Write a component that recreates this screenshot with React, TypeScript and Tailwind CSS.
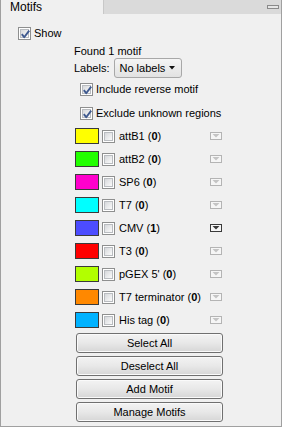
import React from "react";

const font = { fontFamily: '"Liberation Sans", Arial, sans-serif' };

function Check({ checked }: { checked?: boolean }) {
  return (
    <div className="relative w-[13px] h-[13px] shrink-0 border border-[#8e8f8f] bg-white p-[1px]">
      <div className="w-full h-full border border-[#b9bcc0] bg-linear-to-br from-[#d6d8db] to-[#fbfbfb]" />
      {checked && (
        <svg className="absolute left-0 top-0" width="13" height="13" viewBox="0 0 13 13">
          <path d="M2.8 6.2 L5.2 9.2 L10.2 2.6" fill="none" stroke="#3f5a8f" strokeWidth="1.9" strokeLinejoin="round" />
        </svg>
      )}
    </div>
  );
}

function Arrow({ enabled }: { enabled?: boolean }) {
  const c = enabled ? "#3a3a3a" : "#b4b4b4";
  const f = enabled ? "#3a3a3a" : "#c4c4c4";
  return (
    <svg width="12" height="8" viewBox="0 0 12 8" className="shrink-0">
      <rect x="0.5" y="0.5" width="11" height="7" fill="#f6f6f6" stroke={c} />
      <polygon points="2.5,2 9.5,2 6,5.5" fill={f} />
    </svg>
  );
}

const motifs = [
  { name: "attB1", count: 0, color: "#ffff00" },
  { name: "attB2", count: 0, color: "#22ff00" },
  { name: "SP6", count: 0, color: "#ff00cc" },
  { name: "T7", count: 0, color: "#00ffff" },
  { name: "CMV", count: 1, color: "#4c4cff" },
  { name: "T3", count: 0, color: "#ff0000" },
  { name: "pGEX 5'", count: 0, color: "#b2ff00" },
  { name: "T7 terminator", count: 0, color: "#ff8800" },
  { name: "His tag", count: 0, color: "#00b2ff" },
];

function Btn({ label }: { label: string }) {
  return (
    <div className="ml-[75px] w-[147px] h-[20px] rounded-[3px] border border-[#707070] bg-linear-to-b from-[#f3f3f3] via-[#e8e8e8] to-[#d6d6d6] flex items-center justify-center text-[11px] text-black shadow-[inset_0_0_0_1px_#fafafa]">
      {label}
    </div>
  );
}

export default function App() {
  return (
    <div className="w-[283px] h-[428px] bg-white" style={font}>
      <div className="w-[282px] h-[427px] bg-[#f0f0f0] border-l border-r border-b border-[#a0a0a0] flex flex-col text-[11px] text-black">
        <div className="h-[14px] flex bg-[#dadada] shrink-0">
          <div className="w-[103px] h-[14px] bg-[#f0f0f0] border-r border-[#c8c8c8] pl-[9px] text-[12px] leading-[14px]">
            Motifs
          </div>
          <div className="flex-1 flex justify-end items-start pr-[2px] pt-[5px]">
            <div className="w-[12px] h-[4px] border border-[#8a8a8a] bg-[#e6e6e6]" />
          </div>
        </div>

        <div className="mt-[13px] ml-[17px] h-[13px] flex items-center gap-[3px]">
          <Check checked />
          <span className="leading-[13px]">Show</span>
        </div>

        <div className="mt-[4px] ml-[73px] h-[14px] leading-[14px]">Found 1 motif</div>

        <div className="ml-[73px] h-[20px] flex items-center">
          <span>Labels:</span>
          <div className="ml-[5px] w-[68px] h-[20px] rounded-[3px] border border-[#a8a8a8] bg-linear-to-b from-[#f5f5f5] to-[#e2e2e2] flex items-center pl-[4px] pr-[6px] justify-between">
            <span>No labels</span>
            <svg width="6" height="4" viewBox="0 0 6 4">
              <polygon points="0,0 6,0 3,3.5" fill="#111" />
            </svg>
          </div>
        </div>

        <div className="mt-[5px] ml-[79px] h-[13px] flex items-center gap-[3px]">
          <Check checked />
          <span>Include reverse motif</span>
        </div>

        <div className="mt-[11px] ml-[79px] h-[13px] flex items-center gap-[3px]">
          <Check checked />
          <span>Exclude unknown regions</span>
        </div>

        <div className="mt-[8px] flex flex-col gap-[7px]">
          {motifs.map((m) => (
            <div key={m.name} className="ml-[74px] w-[147px] h-[16px] flex items-center">
              <div className="w-[24px] h-[16px] border border-[#3a3a3a] shrink-0" style={{ backgroundColor: m.color }} />
              <div className="ml-[3px]">
                <Check />
              </div>
              <span className="ml-[4px] flex-1 whitespace-nowrap">
                {m.name} (<b>{m.count}</b>)
              </span>
              <Arrow enabled={m.count > 0} />
            </div>
          ))}
        </div>

        <div className="mt-[5px] flex flex-col gap-[3px]">
          <Btn label="Select All" />
          <Btn label="Deselect All" />
          <Btn label="Add Motif" />
          <Btn label="Manage Motifs" />
        </div>
      </div>
    </div>
  );
}
